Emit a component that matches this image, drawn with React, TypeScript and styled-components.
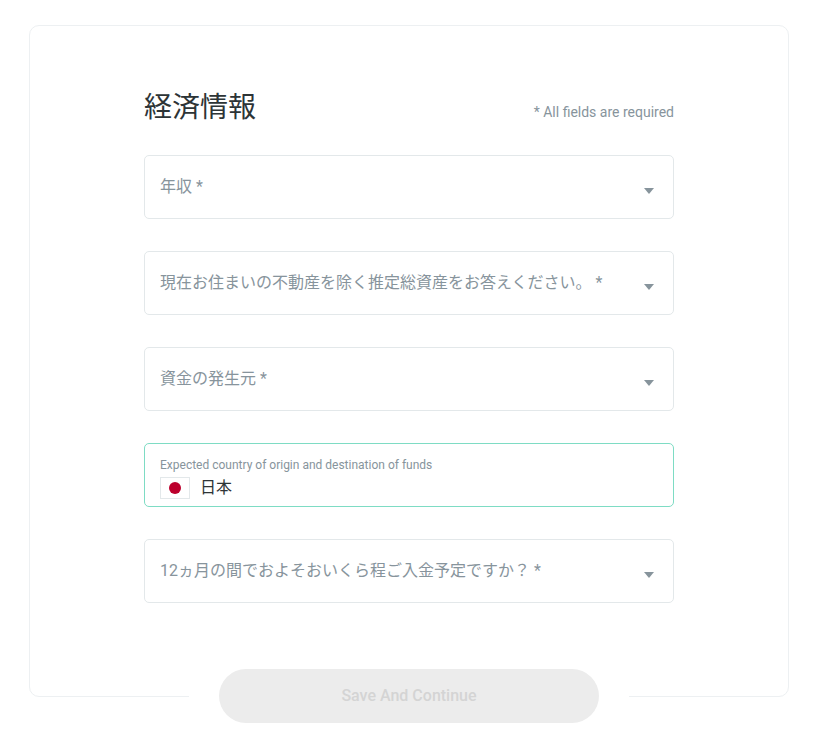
import React from 'react';
import styled, { createGlobalStyle } from 'styled-components';

const GlobalStyle = createGlobalStyle`
  html, body {
    margin: 0;
    padding: 0;
    background-color: #fff;
  }
  body {
    font-family: Roboto, "Noto Sans CJK JP", sans-serif;
  }
`;

const selectFields = {
  income: '年収 *',
  assets: '現在お住まいの不動産を除く推定総資産をお答えください。 *',
  source: '資金の発生元 *',
  deposit: '12ヵ月の間でおよそおいくら程ご入金予定ですか？ *',
};

const SelectField: React.FC<{ label: string }> = ({ label }) => (
  <Field>
    <Placeholder>{label}</Placeholder>
    <Caret />
  </Field>
);

const App: React.FC = () => (
  <Page>
    <GlobalStyle />
    <Card>
      <Header>
        <Title>経済情報</Title>
        <Required>* All fields are required</Required>
      </Header>
      <Form>
        <SelectField label={selectFields.income} />
        <SelectField label={selectFields.assets} />
        <SelectField label={selectFields.source} />
        <Field $active>
          <FloatingLabel>Expected country of origin and destination of funds</FloatingLabel>
          <CountryValue>
            <Flag>
              <svg width="28" height="20" viewBox="0 0 28 20">
                <circle cx="14" cy="10" r="6" fill="#bc002d" />
              </svg>
            </Flag>
            <CountryName>日本</CountryName>
          </CountryValue>
        </Field>
        <SelectField label={selectFields.deposit} />
      </Form>
      <Footer>
        <SaveButton type="button" disabled>
          Save And Continue
        </SaveButton>
      </Footer>
    </Card>
  </Page>
);

const Page = styled.div`
  width: 826px;
  height: 749px;
  padding: 25px 0 0 29px;
  box-sizing: border-box;
  overflow: hidden;
`;

const Card = styled.div`
  width: 760px;
  height: 672px;
  box-sizing: border-box;
  padding: 61px 114px 0 114px;
  border: 1px solid #edf0f2;
  border-radius: 10px;
  display: flex;
  flex-direction: column;
`;

const Header = styled.div`
  height: 68px;
  display: flex;
  justify-content: space-between;
  align-items: flex-start;
`;

const Title = styled.h1`
  margin: 0;
  font-family: "Noto Sans CJK JP", sans-serif;
  font-size: 28px;
  line-height: 36px;
  font-weight: 400;
  color: #2d3436;
`;

const Required = styled.span`
  margin-top: 16px;
  font-size: 14px;
  line-height: 18px;
  color: #87949c;
`;

const Form = styled.div`
  display: flex;
  flex-direction: column;
  gap: 32px;
`;

const Field = styled.div<{ $active?: boolean }>`
  position: relative;
  height: 64px;
  box-sizing: border-box;
  padding: 0 15px;
  border: 1px solid ${({ $active }) => ($active ? '#7edcc4' : '#e3e8ea')};
  border-radius: 5px;
  display: flex;
  flex-direction: column;
  justify-content: center;
`;

const Placeholder = styled.span`
  font-family: Roboto, "Noto Sans CJK JP", sans-serif;
  font-size: 16px;
  line-height: 20px;
  color: #87949c;
`;

const Caret = styled.span`
  position: absolute;
  right: 19px;
  top: 32px;
  width: 0;
  height: 0;
  border-left: 5px solid transparent;
  border-right: 5px solid transparent;
  border-top: 6px solid #87949c;
`;

const FloatingLabel = styled.span`
  margin-top: 9px;
  font-size: 12px;
  line-height: 14px;
  color: #87949c;
`;

const CountryValue = styled.div`
  margin-top: 3px;
  display: flex;
  align-items: center;
  gap: 10px;
`;

const Flag = styled.span`
  width: 30px;
  height: 22px;
  box-sizing: border-box;
  border: 1px solid #e3e8ea;
  display: flex;
  align-items: center;
  justify-content: center;
  overflow: hidden;
`;

const CountryName = styled.span`
  margin-bottom: 4px;
  font-family: "Noto Sans CJK JP", sans-serif;
  font-size: 16px;
  line-height: 22px;
  color: #2d3436;
`;

const Footer = styled.div`
  align-self: center;
  margin-top: auto;
  margin-bottom: -27px;
  padding: 0 30px;
  background-color: #fff;
`;

const SaveButton = styled.button`
  display: block;
  width: 380px;
  height: 54px;
  padding: 0 0 2px;
  border: 0;
  border-radius: 27px;
  background-color: #ececec;
  color: #d4d4d4;
  font-family: Roboto, sans-serif;
  font-size: 16px;
  font-weight: 500;
  cursor: not-allowed;
`;

export default App;
